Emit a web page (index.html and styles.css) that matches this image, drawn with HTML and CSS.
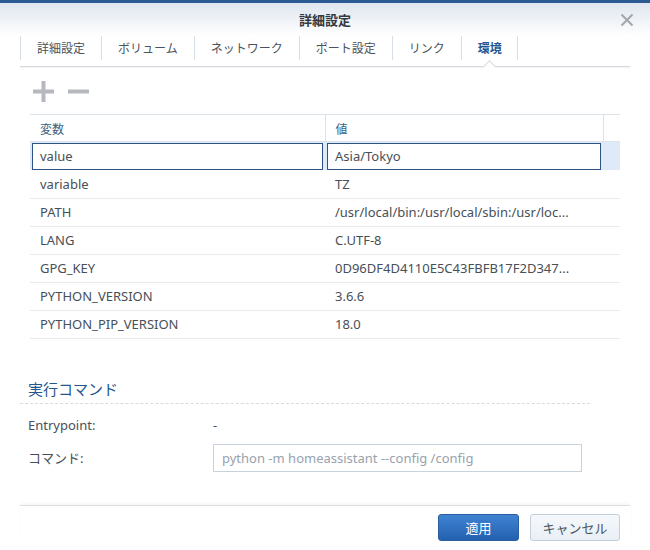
FILE: index.html
```html
<!DOCTYPE html>
<html lang="ja">
<head>
<meta charset="utf-8">
<title>詳細設定</title>
<link rel="stylesheet" href="styles.css">
</head>
<body>
<div class="dialog">
  <div class="topbar"></div>
  <div class="header">
    <div></div>
    <div class="title">詳細設定</div>
    <div class="close">
      <svg width="14" height="14" viewBox="0 0 14 14"><path d="M1.5 1.5 L12.5 12.5 M12.5 1.5 L1.5 12.5" stroke="#a3a7ac" stroke-width="2" fill="none"/></svg>
    </div>
  </div>
  <div class="tabs">
    <div class="tab">詳細設定</div>
    <div class="tab">ボリューム</div>
    <div class="tab">ネットワーク</div>
    <div class="tab">ポート設定</div>
    <div class="tab">リンク</div>
    <div class="tab active">環境</div>
  </div>
  <div class="toolbar">
    <svg class="tool" width="21" height="21" viewBox="0 0 21 21"><rect x="0" y="8.5" width="21" height="4" fill="#b5b9be"/><rect x="8.5" y="0" width="4" height="21" fill="#b5b9be"/></svg>
    <svg class="tool" width="21" height="21" viewBox="0 0 21 21"><rect x="0" y="8.5" width="21" height="4" fill="#b5b9be"/></svg>
  </div>
  <table class="grid">
    <colgroup><col class="c1"><col class="c2"><col class="c3"></colgroup>
    <thead>
      <tr><th>変数</th><th>値</th><th></th></tr>
    </thead>
    <tbody>
      <tr class="editing">
        <td><div class="cell-input">value</div></td>
        <td><div class="cell-input">Asia/Tokyo</div></td>
        <td></td>
      </tr>
      <tr><td>variable</td><td>TZ</td><td></td></tr>
      <tr><td>PATH</td><td>/usr/local/bin:/usr/local/sbin:/usr/loc...</td><td></td></tr>
      <tr><td>LANG</td><td>C.UTF-8</td><td></td></tr>
      <tr><td>GPG_KEY</td><td>0D96DF4D4110E5C43FBFB17F2D347...</td><td></td></tr>
      <tr><td>PYTHON_VERSION</td><td>3.6.6</td><td></td></tr>
      <tr><td>PYTHON_PIP_VERSION</td><td>18.0</td><td></td></tr>
    </tbody>
  </table>
  <div class="section">
    <div class="section-title">実行コマンド</div>
    <div class="form">
      <div class="row"><div class="label">Entrypoint:</div><div class="value">-</div></div>
      <div class="row"><div class="label">コマンド:</div><div class="input">python -m homeassistant --config /config</div></div>
    </div>
  </div>
  <div class="footer">
    <button class="btn primary">適用</button>
    <button class="btn">キャンセル</button>
  </div>
</div>
</body>
</html>
```
FILE: styles.css
```css
* { box-sizing: border-box; }
html, body { margin: 0; padding: 0; background: #fff; }
body {
  width: 650px;
  height: 550px;
  overflow: hidden;
  font-family: "Noto Sans", "Noto Sans CJK JP", sans-serif;
  font-size: 13px;
  color: #474f57;
}
.topbar { height: 3px; background: #2c5a92; }
.header {
  height: 33px;
  display: grid;
  grid-template-columns: 1fr auto 1fr;
  align-items: center;
  background: linear-gradient(#dfe6ef, #ffffff);
}
.title {
  font-family: "Noto Sans CJK JP", sans-serif;
  font-weight: bold;
  font-size: 13px;
  color: #333a42;
}
.close { justify-self: end; padding-right: 16px; display: flex; }
.tabs {
  margin: 0 20px;
  padding-top: 0;
  padding-bottom: 6px;
  display: flex;
  border-bottom: 1px solid #d4d9df;
  box-shadow: 0 1px 1px rgba(0,0,0,0.04);
}
.tab {
  position: relative;
  height: 24px;
  line-height: 24px;
  padding: 0 16px 0 16px;
  border-left: 1px solid #d8dee5;
  font-family: "Noto Sans CJK JP", sans-serif;
  font-size: 12px;
  color: #4a535c;
  white-space: nowrap;
}
.tab:last-child { border-right: 1px solid #d8dee5; padding-right: 15px; }
.tab.active { color: #1f5795; font-weight: bold; }
.tab.active::after {
  content: "";
  position: absolute;
  top: 26px;
  left: calc(50% - 4px);
  width: 8px;
  height: 8px;
  background: #fff;
  border-left: 1px solid #d4d9df;
  border-top: 1px solid #d4d9df;
  transform: rotate(45deg);
}
.toolbar {
  display: flex;
  gap: 14px;
  padding: 14px 0 12px 33px;
  height: 47px;
}
.tool { display: block; }
.grid {
  margin-left: 30px;
  width: 590px;
  border-collapse: collapse;
  table-layout: fixed;
}
.c1 { width: 295px; }
.c2 { width: 278px; }
.c3 { width: 17px; }
.grid th {
  height: 27px;
  border-top: 1px solid #dde3ea;
  border-bottom: 1px solid #dde3ea;
  border-right: 1px solid #dde3ea;
  text-align: left;
  font-weight: normal;
  font-family: "Noto Sans CJK JP", sans-serif;
  font-size: 12px;
  color: #41607f;
  padding: 0 10px;
}
.grid th:last-child { border-right: none; }
.grid td {
  height: 28px;
  border-bottom: 1px solid #e6ebf0;
  padding: 0 10px;
  white-space: nowrap;
  overflow: hidden;
}
.grid tr.editing td { background: #dfe9f7; padding: 0 2px; border-bottom: none; }
.grid tr.editing td:first-child { padding-left: 2px; }
.cell-input {
  height: 27px;
  line-height: 25px;
  background: #fff;
  border: 1px solid #2e5484;
  padding: 0 7px;
  margin-top: 1px;
}
.section { margin: 40px 40px 0 20px; }
.section-title {
  font-family: "Noto Sans CJK JP", sans-serif;
  font-size: 15px;
  line-height: 20px;
  color: #24578e;
  padding: 0 0 4px 8px;
  border-bottom: 1px dashed #d5dbe2;
  width: 570px;
}
.form { display: flex; flex-direction: column; gap: 5px; padding: 7px 0 0 8px; }
.row { display: flex; align-items: center; height: 28px; }
.label { width: 185px; }
.input {
  width: 369px;
  height: 28px;
  line-height: 26px;
  border: 1px solid #c8d2de;
  padding: 0 8px;
  color: #98a2ad;
}
.footer {
  margin: 33px 20px 0 20px;
  border-top: 1px solid #dcdfe3;
  box-shadow: 0 -2px 3px rgba(0,0,0,0.03);
  padding: 8px 10px 0 0;
  display: flex;
  justify-content: flex-end;
  gap: 11px;
}
.btn {
  height: 27px;
  border-radius: 3px;
  font-family: "Noto Sans CJK JP", sans-serif;
  font-size: 13px;
  border: 1px solid #c3cfdc;
  background: linear-gradient(#f5f8fb, #e9eff5);
  color: #4b5560;
  width: 90px;
  padding: 0;
}
.btn.primary {
  width: 81px;
  border-color: #2a5ea2;
  background: linear-gradient(#3f83d2, #2361b0);
  color: #fff;
}
```
